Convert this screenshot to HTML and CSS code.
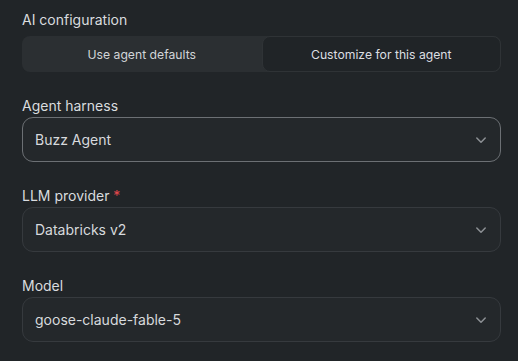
FILE: index.html
```html
<!DOCTYPE html>
<html>
<head>
<meta charset="utf-8">
<link rel="stylesheet" href="styles.css">
</head>
<body>
<div class="form">
  <div class="field field-first">
    <div class="label label-seg">AI configuration</div>
    <div class="segmented">
      <button class="seg">Use agent defaults</button>
      <button class="seg seg-active">Customize for this agent</button>
    </div>
  </div>
  <div class="field">
    <div class="label">Agent harness</div>
    <div class="select select-focus">
      <span class="value">Buzz Agent</span>
      <svg class="chev" width="12" height="12" viewBox="0 0 12 12"><path d="M1.8 4 L6 8.2 L10.2 4" fill="none" stroke="currentColor" stroke-width="1.5" stroke-linecap="round" stroke-linejoin="round"/></svg>
    </div>
  </div>
  <div class="field">
    <div class="label">LLM provider <span class="req">*</span></div>
    <div class="select">
      <span class="value">Databricks v2</span>
      <svg class="chev" width="12" height="12" viewBox="0 0 12 12"><path d="M1.8 4 L6 8.2 L10.2 4" fill="none" stroke="currentColor" stroke-width="1.5" stroke-linecap="round" stroke-linejoin="round"/></svg>
    </div>
  </div>
  <div class="field">
    <div class="label">Model</div>
    <div class="select">
      <span class="value">goose-claude-fable-5</span>
      <svg class="chev" width="12" height="12" viewBox="0 0 12 12"><path d="M1.8 4 L6 8.2 L10.2 4" fill="none" stroke="currentColor" stroke-width="1.5" stroke-linecap="round" stroke-linejoin="round"/></svg>
    </div>
  </div>
</div>
</body>
</html>
```
FILE: styles.css
```css
html, body {
  margin: 0;
  padding: 0;
  background: #212528;
}
body {
  font-family: Inter, "Noto Sans", sans-serif;
  color: #d7dadd;
  -webkit-font-smoothing: antialiased;
}
.form {
  padding: 10px 17px 0 22px;
  display: flex;
  flex-direction: column;
  gap: 24px;
}
.field {
  display: flex;
  flex-direction: column;
}
.label {
  font-size: 14px;
  line-height: 20px;
  margin-bottom: 1px;
  color: #d9dcdf;
}
.label-seg {
  margin-bottom: 6px;
}
.req {
  color: #e5484d;
}
.segmented {
  display: grid;
  grid-template-columns: 1fr 1fr;
  height: 36px;
  background: #2b2f32;
  border-radius: 8px;
}
.seg {
  font-family: inherit;
  font-size: 12.2px;
  color: #d2d5d8;
  background: transparent;
  border: 1px solid transparent;
  border-radius: 8px;
  padding: 0;
  cursor: pointer;
}
.seg-active {
  background: #202427;
  border-color: #2f3336;
  color: #dcdfe2;
}
.select {
  height: 45px;
  box-sizing: border-box;
  border: 1px solid #363a3e;
  border-radius: 11px;
  background: #24282b;
  display: flex;
  align-items: center;
  justify-content: space-between;
  padding: 0 13px 0 12px;
}
.select-focus {
  border-color: #6c7074;
}
.value {
  font-size: 14px;
  color: #d7dadd;
}
.chev {
  color: #8d9195;
}
```
